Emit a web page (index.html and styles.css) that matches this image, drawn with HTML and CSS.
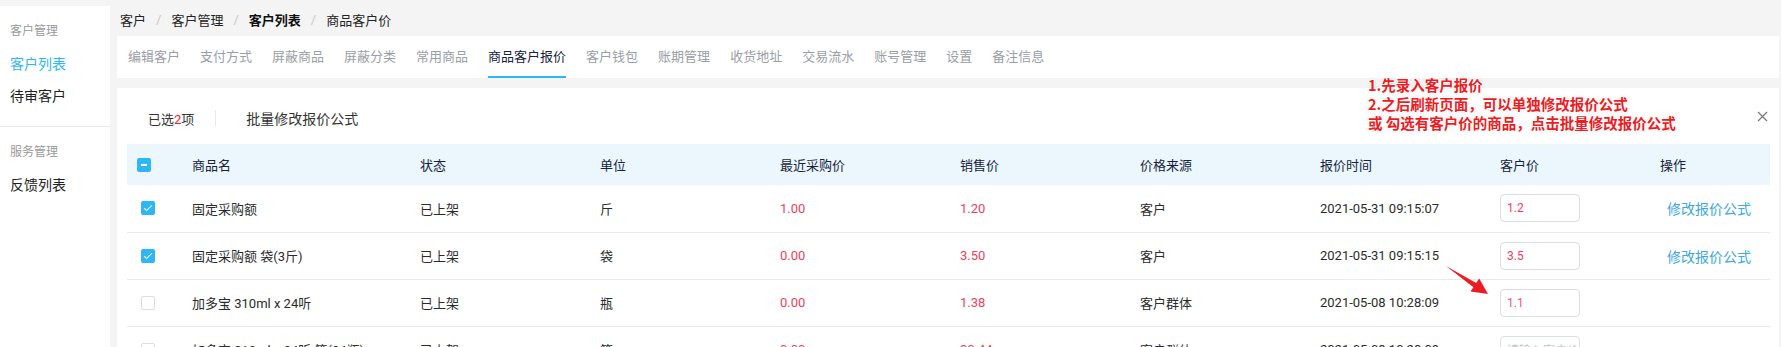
FILE: index.html
```html
<!DOCTYPE html>
<html lang="zh-CN">
<head>
<meta charset="utf-8">
<title>商品客户价</title>
<link rel="stylesheet" href="styles.css">
</head>
<body>
<div class="layout">
  <aside class="sidebar">
    <div class="group">
      <div class="group-title">客户管理</div>
      <a class="nav-item active">客户列表</a>
      <a class="nav-item">待审客户</a>
    </div>
    <div class="group">
      <div class="group-title">服务管理</div>
      <a class="nav-item">反馈列表</a>
    </div>
  </aside>
  <main class="main">
    <nav class="breadcrumb">
      <span>客户</span><span class="sep">/</span>
      <span>客户管理</span><span class="sep">/</span>
      <span class="strong">客户列表</span><span class="sep">/</span>
      <span>商品客户价</span>
    </nav>
    <div class="tabs">
      <a class="tab">编辑客户</a>
      <a class="tab">支付方式</a>
      <a class="tab">屏蔽商品</a>
      <a class="tab">屏蔽分类</a>
      <a class="tab">常用商品</a>
      <a class="tab active">商品客户报价</a>
      <a class="tab">客户钱包</a>
      <a class="tab">账期管理</a>
      <a class="tab">收货地址</a>
      <a class="tab">交易流水</a>
      <a class="tab">账号管理</a>
      <a class="tab">设置</a>
      <a class="tab">备注信息</a>
    </div>
    <section class="panel">
      <div class="toolbar">
        <span class="selected">已选<em>2</em>项</span>
        <span class="divider"></span>
        <span class="batch">批量修改报价公式</span>
      </div>
      <table class="grid">
        <colgroup>
          <col class="c-check"><col class="c-name"><col class="c-std"><col class="c-std"><col class="c-std"><col class="c-std"><col class="c-std"><col class="c-std"><col class="c-price"><col class="c-op">
        </colgroup>
        <thead>
          <tr>
            <th class="check-cell"><span class="cb indeterminate"></span></th>
            <th>商品名</th><th>状态</th><th>单位</th><th>最近采购价</th><th>销售价</th><th>价格来源</th><th>报价时间</th><th>客户价</th><th>操作</th>
          </tr>
        </thead>
        <tbody>
          <tr>
            <td class="check-cell"><span class="cb checked"></span></td>
            <td>固定采购额</td><td>已上架</td><td>斤</td><td class="red">1.00</td><td class="red">1.20</td><td>客户</td><td>2021-05-31 09:15:07</td>
            <td><span class="input red">1.2</span></td><td><a class="link">修改报价公式</a></td>
          </tr>
          <tr>
            <td class="check-cell"><span class="cb checked"></span></td>
            <td>固定采购额 袋(3斤)</td><td>已上架</td><td>袋</td><td class="red">0.00</td><td class="red">3.50</td><td>客户</td><td>2021-05-31 09:15:15</td>
            <td><span class="input red">3.5</span></td><td><a class="link">修改报价公式</a></td>
          </tr>
          <tr>
            <td class="check-cell"><span class="cb"></span></td>
            <td>加多宝 310ml x 24听</td><td>已上架</td><td>瓶</td><td class="red">0.00</td><td class="red">1.38</td><td>客户群体</td><td>2021-05-08 10:28:09</td>
            <td><span class="input pink">1.1</span></td><td></td>
          </tr>
          <tr>
            <td class="check-cell"><span class="cb"></span></td>
            <td>加多宝 310ml x 24听 箱(24瓶)</td><td>已上架</td><td>箱</td><td class="red">0.00</td><td class="red">30.44</td><td>客户群体</td><td>2021-05-08 10:28:09</td>
            <td><span class="input placeholder">请输入客户价</span></td><td></td>
          </tr>
        </tbody>
      </table>
      <div class="note">
        <p>1.先录入客户报价</p>
        <p>2.之后刷新页面，可以单独修改报价公式</p>
        <p>或 勾选有客户价的商品，点击批量修改报价公式</p>
      </div>
      <svg class="arrow" width="56" height="40" viewBox="0 0 56 40">
        <polygon points="6,6 33.4,27.2 30.4,31.4 48,34 39.2,18.6 36.2,23" fill="#ec1c24"/>
      </svg>
      <span class="close">
        <svg width="11" height="11" viewBox="0 0 11 11"><path d="M1 1L10 10M10 1L1 10" stroke="#777" stroke-width="1.2" fill="none"/></svg>
      </span>
    </section>
  </main>
</div>
</body>
</html>
```
FILE: styles.css
```css
* { box-sizing: border-box; }
html, body { margin: 0; padding: 0; }
body {
  background: #f4f4f4;
  font-family: Roboto, "Noto Sans CJK SC", sans-serif;
  color: #333;
  width: 1781px;
  height: 347px;
  overflow: hidden;
}
.layout {
  display: flex;
  align-items: flex-start;
}
.sidebar {
  width: 110px;
  flex: none;
  margin-top: 6px;
  background: #fff;
  min-height: 400px;
}
.group {
  padding: 15px 0 14px 10px;
  display: flex;
  flex-direction: column;
}
.group + .group { border-top: 1px solid #e8eaec; }
.group-title {
  font-size: 12px;
  line-height: 20px;
  color: #999;
  margin-bottom: 7px;
}
.nav-item {
  font-size: 14px;
  line-height: 32px;
  color: #222;
}
.nav-item.active { color: #2db7f5; }

.main {
  flex: 1;
  margin-left: 7px;
  margin-right: 2px;
  display: flex;
  flex-direction: column;
}
.breadcrumb {
  height: 36px;
  padding: 2px 0 0 3px;
  display: flex;
  align-items: center;
  font-size: 13px;
  color: #222;
}
.breadcrumb .sep {
  color: #c5c8ce;
  margin: 0 10px;
  font-size: 13px;
}
.breadcrumb .strong { font-weight: 700; color: #111; }

.tabs {
  height: 42px;
  background: #fff;
  padding-left: 11px;
  display: flex;
  gap: 20px;
}
.tab {
  font-size: 13px;
  line-height: 40px;
  color: #9a9ea6;
  border-bottom: 2px solid transparent;
  height: 42px;
  padding-top: 1px;
}
.tab.active {
  color: #17233d;
  border-bottom-color: #2db7f5;
}

.panel {
  margin-top: 10px;
  background: #fff;
  padding: 0 9px 0 10px;
  position: relative;
  min-height: 300px;
}
.toolbar {
  height: 52px;
  margin-top: 4px;
  display: flex;
  align-items: center;
  padding-left: 21px;
}
.selected { font-size: 13px; color: #333; }
.selected em { font-style: normal; color: #f5222d; }
.divider {
  width: 1px;
  height: 16px;
  background: #e8eaec;
  margin: 0 30px 0 21px;
}
.batch { font-size: 14px; color: #333; }

.grid {
  width: 1643px;
  border-collapse: collapse;
  table-layout: fixed;
  font-size: 13px;
}
.c-check { width: 53px; }
.c-name { width: 228px; }
.c-std { width: 180px; }
.c-price { width: 160px; }
.c-op { width: 122px; }
.grid th {
  background: #ebf7fd;
  height: 41px;
  text-align: left;
  font-weight: 400;
  color: #17233d;
  padding: 0 0 0 12px;
}
.grid td {
  height: 47px;
  border-bottom: 1px solid #e8eaec;
  padding: 0 0 0 12px;
  color: #2b2b2b;
  white-space: nowrap;
  overflow: hidden;
}
.grid th.check-cell { padding-left: 10px; }
.grid td.check-cell { padding-left: 14px; }
.grid td.red { color: #f2405a; }
.cb {
  display: block;
  width: 14px;
  height: 14px;
  border: 1px solid #dcdee2;
  border-radius: 2px;
  background: #fff;
  position: relative;
}
.cb.checked, .cb.indeterminate {
  background: #2db7f5;
  border-color: #2db7f5;
}
.cb.checked::after {
  content: "";
  position: absolute;
  left: 4px;
  top: 1px;
  width: 3px;
  height: 7px;
  border: solid #fff;
  border-width: 0 1.5px 1.5px 0;
  transform: rotate(45deg);
}
.cb.indeterminate::after {
  content: "";
  position: absolute;
  left: 3px;
  top: 5px;
  width: 6px;
  height: 2px;
  background: #fff;
}
.input {
  display: flex;
  align-items: center;
  width: 80px;
  height: 28px;
  border: 1px solid #dcdee2;
  border-radius: 4px;
  padding-left: 6px;
  font-size: 12px;
  overflow: hidden;
}
.input.red { color: #f2405a; }
.input.pink { color: #f0548a; }
.input.placeholder { color: #c5c8ce; }
.link {
  color: #3ea8e0;
  font-size: 14px;
  padding-left: 7px;
}

.note {
  position: absolute;
  left: 1251px;
  top: -13px;
  font-family: "Noto Sans CJK SC", sans-serif;
  font-size: 14.5px;
  font-weight: 700;
  line-height: 19px;
  color: #ec1c24;
  text-shadow:
    1px 0 0 #fff, -1px 0 0 #fff, 0 1px 0 #fff, 0 -1px 0 #fff,
    1px 1px 0 #fff, -1px -1px 0 #fff, 1px -1px 0 #fff, -1px 1px 0 #fff,
    0 0 3px rgba(0, 0, 0, 0.35);
}
.note p { margin: 0; }
.arrow {
  position: absolute;
  left: 1323px;
  top: 172px;
}
.close {
  position: absolute;
  right: 11px;
  top: 23px;
  display: flex;
}
```
